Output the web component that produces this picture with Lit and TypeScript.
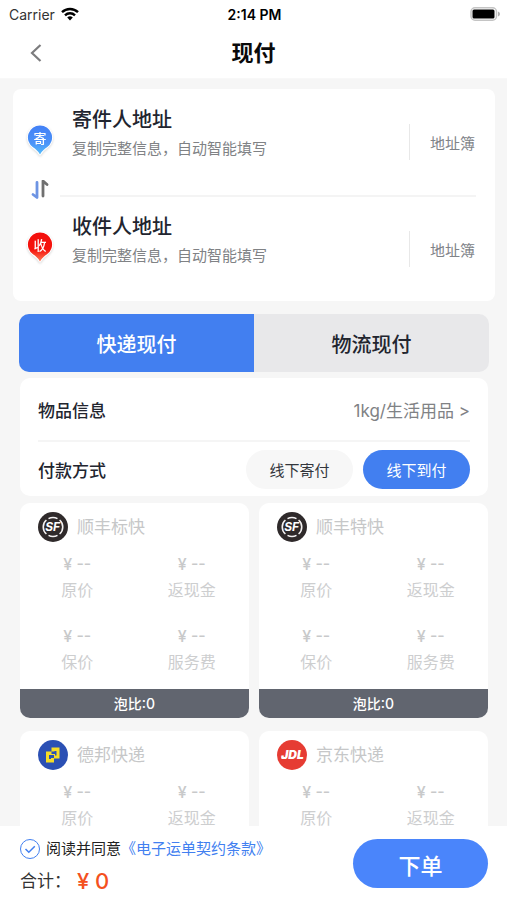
import { LitElement, html, css, svg, nothing } from "lit";
import { customElement, property, state } from "lit/decorators.js";
import { classMap } from "lit/directives/class-map.js";

const base = css`
  *,
  *::before,
  *::after {
    box-sizing: border-box;
  }
  button {
    margin: 0;
    padding: 0;
    border: 0;
    background: none;
    color: inherit;
    font: inherit;
    cursor: pointer;
  }
  svg {
    display: block;
    flex: none;
  }
  h1,
  h2,
  p,
  dl,
  dd {
    margin: 0;
    font-weight: inherit;
    font-size: inherit;
  }
`;

type Brand = "sf" | "deppon" | "jdl";

const logos = {
  sf: svg`
    <circle cx="15" cy="15" r="15" fill="#2f2a2b"/>
    <path d="M10.500 6.600A10 10 0 0 1 19.500 6.600M10.500 23.400A10 10 0 0 0 19.500 23.400M8.400 8C4.200 11.400 4.200 18.600 8.400 22M21.600 8C25.800 11.400 25.800 18.600 21.600 22" fill="none" stroke="#f4f2f2" stroke-width="1.600"/>
    <text x="14.600" y="19.200" text-anchor="middle" font-size="12" font-weight="700" font-style="italic" fill="#fff">SF</text>`,
  deppon: svg`
    <circle cx="15" cy="15" r="15" fill="#2b50b4"/>
    <path d="M8 11.500h5.500v-4h8v11h-5.500v4h-8zM11 15v4h2v-1h3v-3zM13.500 11.500v2.500h3.500v1.500h1.500v-4.500h-2v.5z" fill="#f6dc26" fill-rule="evenodd"/>`,
  jdl: svg`
    <circle cx="15" cy="15" r="15" fill="#e63c33"/>
    <text x="15.500" y="19" text-anchor="middle" font-size="12" font-weight="900" font-style="italic" fill="#fff">JDL</text>
    <path d="M4.500 18h4" stroke="#fff" stroke-width="2"/>`,
};

@customElement("address-row")
class AddressRow extends LitElement {
  @property() mark = "";
  @property() heading = "";
  @property() tone = "blue";

  static styles = [
    base,
    css`
      :host {
        display: flex;
        align-items: flex-end;
      }
      .pin {
        width: 30px;
        height: 36px;
        margin-right: 17px;
        overflow: visible;
        filter: drop-shadow(0 1px 1px rgba(0, 0, 0, 0.16));
      }
      .entry {
        flex: 1;
        display: flex;
        flex-direction: column;
        gap: 6px;
        text-align: left;
      }
      .heading {
        font-size: 20px;
        line-height: 24px;
        font-weight: 500;
        color: #22252f;
      }
      .hint {
        font-size: 15px;
        line-height: 22px;
        color: #808285;
      }
      .book {
        width: 86px;
        height: 36px;
        border-left: 1px solid #e8e8e8;
        padding-left: 20px;
        text-align: left;
        font-size: 15px;
        color: #808388;
      }
    `,
  ];

  render() {
    const red = this.tone === "red";
    return html`
      <svg class="pin" viewBox="0 0 30 36" aria-hidden="true">
        <defs>
          <linearGradient id="g" x1="0" y1="0" x2="0" y2="1">
            <stop offset="0" stop-color=${red ? "#f30f0c" : "#4380f6"} />
            <stop offset=".6" stop-color=${red ? "#f5150e" : "#4a92f8"} />
            <stop offset="1" stop-color=${red ? "#ff7a55" : "#55bdfb"} />
          </linearGradient>
        </defs>
        <path
          d="M15 1.500a12 12 0 0 1 7 21.800C19.500 25 17 27 15 30.500C13 27 10.500 25 8 23.300A12 12 0 0 1 15 1.500z"
          fill="url(#g)"
          stroke="#fff"
          stroke-width="2"
          stroke-linejoin="round"
          paint-order="stroke"
        />
        <text x="15" y="18.500" text-anchor="middle" font-size="13" font-weight="500" fill="#fff">${this.mark}</text>
      </svg>
      <button class="entry">
        <span class="heading">${this.heading}</span>
        <span class="hint">复制完整信息，自动智能填写</span>
      </button>
      <button class="book">地址簿</button>
    `;
  }
}

@customElement("carrier-card")
class CarrierCard extends LitElement {
  @property() name = "";
  @property() brand: Brand = "sf";

  static styles = [
    base,
    css`
      :host {
        display: flex;
        flex-direction: column;
        background: #fff;
        border-radius: 10px;
        overflow: hidden;
      }
      .top {
        display: flex;
        align-items: center;
        gap: 9px;
        padding: 9px 18px 0;
        font-size: 17px;
        line-height: 30px;
        color: #c6c7c8;
      }
      .logo {
        width: 30px;
        height: 30px;
        font-family: "Inter", sans-serif;
      }
      .fees {
        display: grid;
        grid-template-columns: 1fr 1fr;
        row-gap: 20px;
        padding: 9px 0 14px;
        text-align: center;
        color: #cdcecf;
      }
      .fee {
        display: flex;
        flex-direction: column-reverse;
      }
      .label {
        font-size: 16px;
        line-height: 26px;
      }
      .value {
        font-size: 16px;
        line-height: 26px;
        font-weight: 500;
        color: #c8c9ca;
      }
      .ratio {
        background: #61656f;
        color: #fff;
        text-align: center;
        font-size: 14px;
        line-height: 29px;
        font-weight: 500;
      }
    `,
  ];

  render() {
    return html`
      <h2 class="top">
        <svg class="logo" viewBox="0 0 30 30" aria-hidden="true">${logos[this.brand] ?? nothing}</svg>
        ${this.name}
      </h2>
      <dl class="fees">
        ${["原价", "返现金", "保价", "服务费"].map(
          (label) => html`<div class="fee">
            <dt class="label">${label}</dt>
            <dd class="value">¥ --</dd>
          </div>`
        )}
      </dl>
      <p class="ratio">泡比:0</p>
    `;
  }
}

@customElement("app-root")
class AppRoot extends LitElement {
  @state() private tab = 0;
  @state() private pay = 1;

  static styles = [
    base,
    css`
      :host {
        display: flex;
        flex-direction: column;
        height: 100vh;
        background: #f6f6f6;
        color: #22252f;
        font-family: "Inter", "Noto Sans CJK SC", sans-serif;
      }
      .header {
        background: #fff;
        border-bottom: 1px solid #f8f8f8;
      }
      .status {
        display: grid;
        grid-template-columns: 1fr auto 1fr;
        align-items: center;
        height: 28px;
        padding: 0 7px 0 9px;
        font-size: 14px;
        color: #000;
      }
      .network {
        display: flex;
        align-items: center;
        gap: 6px;
        color: #333;
      }
      .time {
        font-weight: 600;
      }
      .battery {
        justify-self: end;
      }
      .nav {
        display: grid;
        grid-template-columns: 48px 1fr 48px;
        align-items: center;
        height: 50px;
        padding: 0 12px;
      }
      .back {
        display: grid;
        place-items: center;
        height: 48px;
      }
      .title {
        text-align: center;
        font-size: 22px;
        line-height: 48px;
        font-weight: 700;
        color: #0a0a0a;
      }
      .content {
        flex: 1;
        min-height: 0;
        overflow-y: auto;
        scrollbar-width: none;
        padding: 10px 12px 0 13px;
      }
      .addresses {
        background: #fff;
        border-radius: 8px;
        padding: 19px 0 34px 12px;
      }
      .swap-row {
        display: flex;
        align-items: flex-end;
        gap: 10px;
        padding: 0 19px 0 5px;
        margin: 20px 0 15px;
      }
      .line {
        flex: 1;
        height: 2px;
        margin-bottom: 3px;
        background: #f4f4f4;
      }
      .order {
        padding: 13px 7px 16px;
      }
      .tabs {
        display: flex;
        height: 58px;
        border-radius: 10px;
        overflow: hidden;
        background: #e8e8ea;
        margin: 0 -1px 6px;
      }
      .tab {
        flex: 1;
        font-size: 20px;
        font-weight: 500;
      }
      .on {
        background: #427ff0;
        color: #fff;
      }
      .panel {
        background: #fff;
        border-radius: 10px;
        padding: 0 18px;
        margin-bottom: 7px;
      }
      .field {
        display: flex;
        align-items: center;
        justify-content: space-between;
        height: 62px;
        font-size: 17px;
      }
      .field + .field {
        height: 56px;
        border-top: 2px solid #f5f5f5;
      }
      .name {
        font-weight: 500;
      }
      .goods {
        color: #808285;
      }
      .choices {
        display: flex;
        gap: 10px;
      }
      .pill {
        width: 107px;
        height: 39px;
        border-radius: 20px;
        background: #f7f7f7;
        font-size: 15px;
        color: #33363c;
      }
      .pill.on {
        background: #427ff0;
        color: #fff;
      }
      .carriers {
        display: grid;
        grid-template-columns: 1fr 1fr;
        gap: 13px 10px;
      }
      .footer {
        display: flex;
        align-items: flex-start;
        justify-content: space-between;
        padding: 13px 19px 5px 20px;
        background: #fff;
      }
      .agree {
        display: flex;
        align-items: center;
        font-size: 15px;
        line-height: 20px;
        color: #222;
      }
      .check {
        display: grid;
        margin-right: 6px;
      }
      .box,
      .tick {
        grid-area: 1 / 1;
        width: 20px;
        height: 20px;
        margin: 0;
      }
      .box {
        appearance: none;
        border: 1px solid #427ff0;
        border-radius: 50%;
      }
      .tick {
        pointer-events: none;
        visibility: hidden;
      }
      .box:checked + .tick {
        visibility: visible;
      }
      .terms {
        color: #427ff0;
        text-decoration: none;
      }
      .total {
        display: flex;
        align-items: center;
        font-size: 17px;
        line-height: 28px;
        padding-top: 8px;
        color: #333;
      }
      .amount {
        margin-left: 6px;
        font-size: 22px;
        font-weight: 500;
        color: #f4511e;
      }
      .submit {
        width: 135px;
        height: 49px;
        border-radius: 25px;
        background: #4a85fb;
        color: #fff;
        font-size: 22px;
        font-weight: 500;
      }
    `,
  ];

  render() {
    return html`
      <header class="header">
        <div class="status">
          <span class="network">
            Carrier
            <svg width="18" height="14" viewBox="0 0 18 14" fill="none" stroke="#000" stroke-width="2.400" aria-hidden="true">
              <path d="M1 5.200A11.500 11.500 0 0 1 17 5.200M4 8.300A7.200 7.200 0 0 1 14 8.300" />
              <path d="M6.200 10.600A4 4 0 0 1 11.800 10.600L9 13.600z" fill="#000" stroke="none" />
            </svg>
          </span>
          <span class="time">2:14 PM</span>
          <svg class="battery" width="30" height="14" viewBox="0 0 30 14" aria-hidden="true">
            <rect x="1" y=".8" width="25.500" height="12.400" rx="4" fill="#fff" stroke="#c4c4c4" stroke-width="1.500" />
            <rect x="2.500" y="2.500" width="22" height="9" rx="1.500" fill="#000" />
            <path d="M28 4.500q2 .8 2 2.500t-2 2.500z" fill="#b0b0b0" />
          </svg>
        </div>
        <div class="nav">
          <button class="back" aria-label="返回">
            <svg width="12" height="18" viewBox="0 0 12 18" fill="none" stroke="#7c7c7e" stroke-width="2.200" aria-hidden="true">
              <path d="M10.500 1L2 9l8.500 8" />
            </svg>
          </button>
          <h1 class="title">现付</h1>
        </div>
      </header>

      <main class="content">
        <section class="addresses">
          <address-row mark="寄" heading="寄件人地址"></address-row>
          <div class="swap-row">
            <button aria-label="交换地址">
              <svg width="20" height="20" viewBox="0 0 20 20" fill="none" stroke-width="2.800" stroke-linecap="round" stroke-linejoin="round" aria-hidden="true">
                <path d="M7 2.500V17.500L3 14.500" stroke="#6d94e3" />
                <path d="M13 16V1L17 4.500" stroke="#707070" />
              </svg>
            </button>
            <div class="line"></div>
          </div>
          <address-row mark="收" heading="收件人地址" tone="red"></address-row>
        </section>

        <section class="order">
          <div class="tabs" role="tablist">
            ${["快递现付", "物流现付"].map(
              (t, i) => html`<button
                role="tab"
                aria-selected=${this.tab === i}
                class=${classMap({ tab: true, on: this.tab === i })}
                @click=${() => (this.tab = i)}
              >${t}</button>`
            )}
          </div>
          <div class="panel">
            <div class="field">
              <span class="name">物品信息</span>
              <button class="goods">1kg/生活用品 &gt;</button>
            </div>
            <div class="field">
              <span class="name">付款方式</span>
              <div class="choices">
                ${["线下寄付", "线下到付"].map(
                  (t, i) => html`<button
                    aria-pressed=${this.pay === i}
                    class=${classMap({ pill: true, on: this.pay === i })}
                    @click=${() => (this.pay = i)}
                  >${t}</button>`
                )}
              </div>
            </div>
          </div>
          <div class="carriers">
            <carrier-card name="顺丰标快" brand="sf"></carrier-card>
            <carrier-card name="顺丰特快" brand="sf"></carrier-card>
            <carrier-card name="德邦快递" brand="deppon"></carrier-card>
            <carrier-card name="京东快递" brand="jdl"></carrier-card>
          </div>
        </section>
      </main>

      <footer class="footer">
        <div>
          <div class="agree">
            <span class="check">
              <input class="box" id="agree" type="checkbox" checked />
              <svg class="tick" viewBox="0 0 20 20" fill="none" stroke="#427ff0" stroke-width="1.500" aria-hidden="true">
                <path d="M5.500 10l3.300 3.300 6-6" />
              </svg>
            </span>
            <label for="agree">阅读并同意</label><a class="terms" href="#terms">《电子运单契约条款》</a>
          </div>
          <div class="total">合计：<strong class="amount">¥ 0</strong></div>
        </div>
        <button class="submit">下单</button>
      </footer>
    `;
  }
}
